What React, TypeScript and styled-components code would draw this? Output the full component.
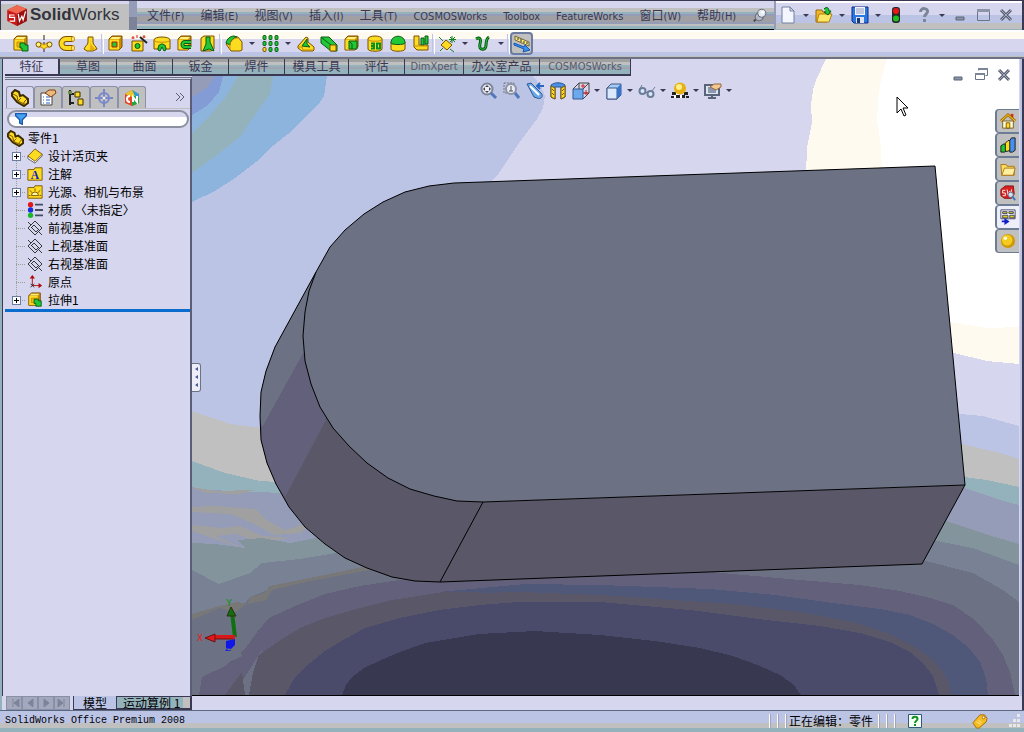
import React from "react";
import styled, { createGlobalStyle } from "styled-components";

const color = {
  navy: "#3a3852",
  lavender: "#d6d6ee",
  ice: "#bcc4e6",
  silver: "#c0c0c0",
  teal: "#94b2bc",
  slate: "#949cb8",
  cream: "#fffaf0",
};

const cjk = '"Noto Sans CJK SC", sans-serif';
const uiFont = `"DejaVu Sans Condensed", ${cjk}`;

const GlobalStyle = createGlobalStyle`
  * { box-sizing: border-box; }
  body { margin: 0; background: ${color.lavender}; color: #000; font: 12px/18px ${uiFont}; }
  button { margin: 0; padding: 0; border: 0; background: none; font: inherit; color: inherit; }
  svg { display: block; flex: none; }
`;

const Window = styled.div`
  display: flex;
  flex-direction: column;
  min-height: 100vh;
  background: ${color.lavender};
`;

/* ---------- title bar ---------- */

const TitleBar = styled.header`
  display: flex;
  height: 30px;
  border-top: 1px solid ${color.navy};
  border-left: 1px solid ${color.navy};
  border-right: 2px solid ${color.navy};
  flex: none;
`;

const Brand = styled.div`
  display: flex;
  align-items: center;
  gap: 2px;
  width: 128px;
  padding: 0 0 2px 5px;
  background: linear-gradient(${color.lavender} 3px, ${color.silver} 3px);
  color: #34343c;
  font: 17px/20px "Liberation Sans", sans-serif;
`;

const BrandEdge = styled.div`
  width: 8px;
  background: linear-gradient(${color.slate} 16px, #7c8298 16px);
`;

const MenuBar = styled.nav`
  display: flex;
  flex: 1;
  align-items: center;
  gap: 16px;
  padding: 2px 0 0 10px;
  border-bottom: 1px solid #000;
  background: linear-gradient(
    ${color.lavender} 7px, ${color.silver} 7px 11px, ${color.teal} 11px 13px,
    ${color.slate} 13px 15px, #a0a0a4 15px 21px, ${color.slate} 21px 23px,
    ${color.silver} 23px 25px, ${color.teal} 25px
  );
`;

const MenuItem = styled.button`
  color: ${color.navy};
  font-size: 12px;
  line-height: 18px;
  white-space: nowrap;
`;

const Latin = styled.span`
  font-size: 11px;
`;

const QuickAccess = styled.div`
  display: flex;
  align-items: center;
  padding-right: 5px;
  border-left: 2px solid ${color.slate};
  border-bottom: 1px solid ${color.teal};
  background: linear-gradient(#fff 2px, ${color.lavender} 2px 14px, ${color.ice} 14px 22px, ${color.silver} 22px);
`;

const Gap = styled.span<{ $w?: number }>`
  width: ${(p) => p.$w ?? 5}px;
`;

/* ---------- command toolbar ---------- */

const ToolBar = styled.div`
  display: flex;
  align-items: center;
  flex: none;
  height: 29px;
  padding-left: 9px;
  border-bottom: 2px solid #6c7284;
  background: linear-gradient(#fff 2px, ${color.cream} 2px 9px, ${color.lavender} 9px 22px, ${color.ice} 22px 26px, ${color.silver} 26px);
`;

const IconButton = styled.button<{ $pressed?: boolean }>`
  display: flex;
  align-items: center;
  justify-content: center;
  width: 23px;
  height: 23px;
  border: ${(p) => (p.$pressed ? "2px solid #6c7ca0" : "0")};
  border-radius: ${(p) => (p.$pressed ? "4px" : "0")};
  background: ${(p) => (p.$pressed ? color.silver : "none")};
`;

const DropButton = styled.button<{ $wide?: boolean }>`
  display: flex;
  align-items: center;
  justify-content: center;
  width: ${(p) => (p.$wide ? "13px" : "10px")};
  height: 23px;

  &::after {
    content: "";
    border: 3px solid transparent;
    border-top-color: ${color.navy};
    border-bottom: 0;
  }
`;

const Separator = styled.span`
  width: 3px;
  height: 20px;
  border-left: 1px solid ${color.ice};
  border-right: 1px solid #fff;
`;

/* ---------- workspace ---------- */

const Workspace = styled.main`
  display: grid;
  flex: 1;
  grid-template-columns: 187px minmax(0, 1fr);
  grid-template-rows: 17px minmax(0, 1fr);
  border-left: 2px solid ${color.teal};
  border-right: 2px solid ${color.navy};
  box-shadow: inset 1px 0 ${color.navy}, inset -1px 0 ${color.ice}, inset -2px 0 ${color.ice};
  padding: 0 3px 0 3px;
`;

const CommandTabs = styled.div`
  display: flex;
  grid-area: 1 / 1 / 2 / 3;
  z-index: 1;
  justify-self: start;
`;

const CommandTab = styled.button<{ $w: number; $active?: boolean; $dim?: boolean }>`
  width: ${(p) => p.$w}px;
  height: 17px;
  border: solid ${color.navy};
  border-width: ${(p) => (p.$active ? "0 2px 2px 0" : "0 1px 2px 0")};
  background: ${(p) =>
    p.$active
      ? color.lavender
      : `linear-gradient(#a0a0a0 3px, ${color.silver} 3px 6px, ${color.teal} 6px 8px, #a0a4b0 8px 10px, ${color.teal} 10px)`};
  color: ${(p) => (p.$dim ? "#5a5868" : color.navy)};
  line-height: 14px;
  white-space: nowrap;
`;

const SidePanel = styled.aside`
  display: flex;
  flex-direction: column;
  grid-area: 2 / 1;
  margin-top: 1px;
  padding-top: 7px;
  border-top: 3px double #6c7284;
  border-right: 2px solid #5a5e78;
  background: ${color.lavender};
`;

const PanelTabs = styled.div`
  display: flex;
  align-items: flex-end;
  height: 22px;
  padding-left: 1px;
  border-bottom: 1px solid ${color.silver};
`;

const PanelTab = styled.button<{ $active?: boolean }>`
  display: flex;
  align-items: center;
  justify-content: center;
  width: 28px;
  height: 22px;
  border: 1px solid #8c90a8;
  border-bottom: 0;
  border-radius: 3px 3px 0 0;
  background: ${(p) => (p.$active ? color.lavender : color.silver)};
`;

const MoreButton = styled.button`
  margin-left: auto;
  padding-right: 5px;
  height: 22px;
`;

const FilterBox = styled.label`
  display: flex;
  align-items: center;
  height: 18px;
  margin: 1px 1px 1px 2px;
  padding-left: 6px;
  border: 2px solid #8c90a0;
  border-radius: 9px;
  background: linear-gradient(${color.lavender} 5px, #fff 5px);
`;

const FilterInput = styled.input`
  flex: 1;
  min-width: 0;
  border: 0;
  outline: 0;
  background: transparent;
  font: 12px/14px ${uiFont};
`;

const Tree = styled.ul`
  margin: 0;
  padding: 0 0 0 2px;
  list-style: none;
  border-bottom: 3px solid #0a6ccc;
`;

const TreeRow = styled.li<{ $root?: boolean }>`
  display: flex;
  align-items: center;
  gap: ${(p) => (p.$root ? "4px" : "5px")};
  height: 18px;
  font: 12px/18px ${cjk};
  white-space: pre;
`;

const Branch = styled.span<{ $last?: boolean }>`
  display: flex;
  align-items: center;
  align-self: stretch;
  width: 14px;
  margin-left: 4px;
  margin-right: -3px;
  background:
    repeating-linear-gradient(#a09c98 0 1px, transparent 1px 2px) 5px 0 / 1px ${(p) => (p.$last ? "9px" : "18px")} no-repeat,
    repeating-linear-gradient(90deg, #a09c98 0 1px, transparent 1px 2px) 5px 9px / 9px 1px no-repeat;
`;

const Expander = styled.button`
  width: 9px;
  height: 9px;
  margin-left: 1px;
  border: 1px solid #6c7ca0;
  background:
    linear-gradient(#000, #000) center / 5px 1px no-repeat,
    linear-gradient(#000, #000) center / 1px 5px no-repeat,
    #fff;
`;

/* ---------- graphics area ---------- */

const Viewport = styled.section`
  display: grid;
  grid-area: 1 / 2 / 3 / 3;
  grid-template: minmax(0, 1fr) / minmax(0, 1fr);
  min-height: 0;
  position: relative;
  border-bottom: 1px solid #000;

  > * { grid-area: 1 / 1; }
`;

const Scene = styled.svg`
  width: 100%;
  height: 100%;
  min-height: 0;
`;

const ViewTools = styled.div`
  display: flex;
  align-self: start;
  justify-self: center;
  margin-top: 20px;
`;

const DocControls = styled.div`
  display: flex;
  align-self: start;
  justify-self: end;
  margin: 4px 4px 0 0;
`;

const TaskTabs = styled.div`
  display: flex;
  flex-direction: column;
  align-self: start;
  justify-self: end;
  margin-top: 50px;
`;

const TaskTab = styled.button<{ $active?: boolean }>`
  display: flex;
  align-items: center;
  justify-content: center;
  width: 24px;
  height: 24px;
  border: solid #6c7c94;
  border-width: 1px 0 1px 2px;
  border-radius: 4px 0 0 4px;
  background: ${(p) => (p.$active ? "#eeeef8" : color.silver)};
`;

const PanelHandle = styled.button`
  display: flex;
  flex-direction: column;
  align-items: center;
  justify-content: space-evenly;
  align-self: center;
  justify-self: start;
  width: 9px;
  height: 29px;
  border: 1px solid #6c7284;
  border-left: 0;
  border-radius: 0 3px 3px 0;
  background: #eeeef8;

  span {
    border: 2px solid transparent;
    border-right: 3px solid #4a5a9a;
    border-left: 0;
  }
`;

const Pointer = styled.svg`
  position: absolute;
  left: 704px;
  top: 37px;
`;

/* ---------- bottom bars ---------- */

const SheetBar = styled.div`
  display: flex;
  flex: none;
  height: 14px;
  padding-left: 4px;
  border-left: 2px solid ${color.teal};
  border-right: 2px solid ${color.navy};
`;

const SheetNav = styled.button`
  display: flex;
  align-items: center;
  justify-content: center;
  width: 16px;
  height: 14px;
  border: 1px solid #8890a8;
  background: #a4a8bc;
`;

const SheetTab = styled.button<{ $active?: boolean }>`
  height: 14px;
  padding: ${(p) => (p.$active ? "0 9px" : "0 10px 0 6px")};
  margin-left: ${(p) => (p.$active ? "3px" : "0")};
  border: solid ${color.navy};
  border-width: ${(p) => (p.$active ? "0 1px 1px" : "1px 2px 2px 0")};
  background: ${(p) => (p.$active ? color.ice : `linear-gradient(90deg, ${color.teal} 66px, ${color.silver} 66px)`)};
  font: 12px/10px ${cjk};
  white-space: nowrap;
`;

const StatusBar = styled.footer`
  display: flex;
  align-items: center;
  flex: none;
  height: 22px;
  padding: 0 3px 2px 5px;
  border-top: 1px solid #5a6880;
  background: linear-gradient(${color.ice} 12px, ${color.silver} 12px 17px, ${color.teal} 17px);
  font: 10px/18px "Liberation Mono", monospace;
`;

const StatusText = styled.span`
  flex: 1;
`;

const StatusMode = styled.span`
  font: 12px/18px ${cjk};
  white-space: nowrap;
`;

const Ridges = styled.span`
  width: 20px;
  height: 14px;
  background: repeating-linear-gradient(90deg, ${color.cream} 0 1px, #9ca4c0 1px 2px, transparent 2px 8px);
`;

const StatusButton = styled.button<{ $gap: number }>`
  margin-right: ${(p) => p.$gap}px;
`;

/* ---------- icon artwork ---------- */

const Y = "#fcdc20";
const D = "#c88c08";
const O = "#7c5000";
const G = "#20c838";
const K = "#0a5a14";

const block = (
  <>
    <path d="M2 4l3-3h10v11l-3 3H2z" fill={D} stroke={O} />
    <path d="M2.500 4.500h9.500v10H2.500z" fill={Y} />
    <path d="M3 4l2-2h9l-2 2z" fill="#fff080" />
  </>
);

const art: Record<string, React.ReactNode> = {
  extrude: <>{block}<path d="M5 7h6v5H5z" fill="#f0b810" stroke={D} /><path d="M8 8h5v2h3v6h-6v-3H8z" fill={G} stroke={K} /></>,
  revolve: <><path d="M9 0v17" stroke="#222" strokeDasharray="5 2" /><path d="M3 8h3l3 2 3-2h3v4h-3l-3 2-3-2H3z" fill={Y} stroke={D} /><circle cx="3.500" cy="9.500" r="2.500" fill="#fff080" stroke={O} /><circle cx="14.500" cy="9.500" r="2.500" fill="#fff080" stroke={O} /></>,
  sweep: <><path d="M15 4H8a4 4 0 0 0 0 9h7" fill="none" stroke={O} strokeWidth="6" /><path d="M15 4H8a4 4 0 0 0 0 9h7" fill="none" stroke={Y} strokeWidth="4" /><ellipse cx="15" cy="4" rx="1.500" ry="2.500" fill="#fff080" stroke={D} /><ellipse cx="15" cy="13" rx="1.500" ry="2.500" fill="#fff080" stroke={D} /></>,
  loft: <><path d="M7 2h5v5c0 3 3 4 4 7l-4 2H6l-3-2c1-3 4-4 4-7z" fill={Y} stroke={O} /><path d="M10 3v5c0 3 3 4 4 6l-2 1H9z" fill="#e8a810" /></>,
  cut: <>{block}<path d="M5 7h5v5H5z" fill={G} stroke="#b02000" /></>,
  hole: <><path d="M2 6h11v10H2z" fill={Y} stroke={O} /><circle cx="7.500" cy="11" r="2.500" fill={G} stroke={K} /><path d="M10 2l7 6" stroke="#222" strokeWidth="2" /><path d="M3 1v3M7 0v3M14 0v3M1.500 3h3M12.500 2h3" stroke="#d82010" /></>,
  revcut: <><path d="M1 5c0-4 16-4 16 0v9h-4l-1-4H6l-1 4H1z" fill={Y} stroke={O} /><path d="M1 5c0 3 16 3 16 0" fill="none" stroke={D} /><path d="M5 15c0-8 8-8 8 0l-2 1-2-4-2 4z" fill={G} stroke={K} /></>,
  sweepcut: <>{block}<path d="M15 7H9a2 2 0 0 0 0 5h6" fill="none" stroke={K} strokeWidth="4" /><path d="M15 7H9a2 2 0 0 0 0 5h6" fill="none" stroke={G} strokeWidth="2" /></>,
  loftcut: <><path d="M2 3l3-2h10v13l-3 2H2z" fill={Y} stroke={O} /><path d="M7 2h4v5l4 9-5-2-6 2 3-7z" fill={G} stroke={K} /></>,
  fillet: <><path d="M1 9l6-7h6l4 5v8l-2 1H6z" fill={Y} stroke={O} /><path d="M1 8c1-4 4-7 8-7l3 1c-4 1-7 4-7 8z" fill={G} stroke={K} /><path d="M5 15V9c1-4 4-6 8-6" fill="none" stroke={D} /></>,
  pattern: <>{[2, 8, 14].map((x) => [0, 6, 12].map((y) => <rect key={`${x}${y}`} x={x} y={y + 0.5} width="3" height="4" rx="1" fill={x === 2 && y === 12 ? Y : G} stroke={x === 2 && y === 12 ? O : K} />))}</>,
  rib: <><path d="M1 11l8-9 2 1v4l6 5v3l-1 1H5l-4-3z" fill={Y} stroke={O} /><path d="M5 11l5-7v5l3 3z" fill={G} stroke={K} /><path d="M1 12h4l1 3h10" fill="none" stroke={D} /></>,
  draft: <><path d="M1 2h8l8 8v6h-6L1 8z" fill={G} stroke={K} /><path d="M10 10h6v6h-6z" fill={Y} stroke={O} /><path d="M2 3l9 7" stroke={K} /></>,
  shell: <>{block}<path d="M6 6h8v8H6z" fill={G} stroke={K} /><path d="M6 6l3 3v5" fill="none" stroke={K} /></>,
  wrap: <><path d="M2 4c0-4 14-4 14 0v10c0 3-14 3-14 0z" fill={Y} stroke={O} /><path d="M2 4c0 3 14 3 14 0" fill="none" stroke={D} /><path d="M5 8.500h3v5H5M5 11h3M11 8.500h3v5h-3z" fill="none" stroke="#089020" strokeWidth="2" /></>,
  dome: <><path d="M2 7v7c0 3 14 3 14 0V7z" fill={Y} stroke={O} /><path d="M2 8c0-9 14-9 14 0 0 2-14 2-14 0z" fill={G} stroke={K} /></>,
  mirror: <><path d="M2 1h5v9h9v5H5l-3-3z" fill={Y} stroke={O} /><path d="M9 3h3v7H9zM13 1h3v8h-3z" fill={G} stroke={K} /><path d="M3 11h12" stroke={D} /></>,
  refgeom: <><path d="M8 5l6 5-5 5-6-5z" fill={Y} stroke={O} /><path d="M1 2l4 4M12 14l4 3M2 16l3-3M14 1v7M11 4.500h7M12 2l5 5M17 2l-5 5" stroke="#108020" /></>,
  curve: <><path d="M2 4c5-3 5 2 4 5s0 6 4 5 0-9 5-12" fill="none" stroke={K} strokeWidth="3" /><path d="M2 4c5-3 5 2 4 5s0 6 4 5 0-9 5-12" fill="none" stroke={G} /></>,
  instant: <><path d="M2 1l14 6v4L2 5z" fill="#fce878" stroke="#6c6440" /><path d="M5 3v2M8 4v3M11 6v2M14 7v2" stroke="#333" /><path d="M1 8l10 4 1-2 5 5-7 2 1-3L1 10z" fill="#3890f0" stroke="#1858b0" /></>,
  page: <path d="M3 1h8l4 4v12H3zM11 1v4h4" fill="#f4f6ff" stroke="#7080a0" />,
  open: <><path d="M1 4h6l1 2h7v3L12 16H1z" fill="#f0b828" stroke="#986810" /><path d="M4 8h13l-3 8H2z" fill="#fce868" stroke="#b88010" /><path d="M9 3c3-3 5-1 5 2h2l-3 4-4-3h2" fill={G} stroke={K} /></>,
  save: <><path d="M1 1h16v16H3l-2-2z" fill="#2878e0" stroke="#102888" /><path d="M4 1h10v8H4z" fill="#f4f4ff" /><path d="M5 3h8M5 5h8M5 7h8" stroke="#909cb8" /><path d="M5 11h8v6H5z" fill="#dce4f4" /><path d="M6 12h3v5H6z" fill="#183878" /></>,
  traffic: <><rect x="5" y="1" width="8" height="16" rx="3" fill="#282828" /><circle cx="9" cy="5" r="3" fill="#e81818" /><circle cx="9" cy="12.500" r="3" fill="#20c020" /></>,
  help: <><path d="M5.500 6c0-5 8-4 7 0-.5 2-3 2.500-3 5" fill="none" stroke="#7c8498" strokeWidth="3" /><path d="M8 13h3v3H8z" fill="#7c8498" /></>,
  min: <path d="M5 11h8v3H5z" fill="#8c94a8" stroke="#5a6478" />,
  max: <><path d="M3.500 3.500h12v11h-12z" fill="none" stroke="#6c7488" /><path d="M3 3h13v3H3z" fill="#8c94a8" /></>,
  restore: <><path d="M6.500 4.500v-2h9v7h-2M3.500 7.500h9v6h-9z" fill="none" stroke="#6c7488" /><path d="M6 2h10v2H6zM3 7h10v2H3z" fill="#7c8498" /></>,
  close: <><path d="M4 4l10 10M14 4L4 14" stroke="#5a6074" strokeWidth="3" /><path d="M4 4l10 10M14 4L4 14" stroke="#a4acbc" /></>,
  pin: <><path d="M2 15l6-6" stroke="#444" strokeWidth="2" /><circle cx="8" cy="10" r="4.500" fill="#b4b8c4" stroke="#5a6074" /><circle cx="11" cy="6" r="4.500" fill="#e4e8f0" stroke="#5a6074" /><circle cx="12" cy="5" r="1.500" fill="#fff" /></>,
  zoomfit: <><circle cx="7" cy="7" r="5.500" fill="#eef" stroke="#7c8498" strokeWidth="2" /><path d="M11 11l5 5" stroke="#5078b8" strokeWidth="3" /><path d="M7 3l2 2H5zM7 11l2-2H5zM3 7l2-2v4zM11 7L9 5v4z" fill="#444" /></>,
  zoomarea: <><path d="M1 1h10v10H1z" fill="none" stroke="#777" strokeDasharray="2 1" /><circle cx="8" cy="7" r="5" fill="#e8eaf4" stroke="#8c94a8" strokeWidth="2" /><path d="M12 11l4 5" stroke="#5078b8" strokeWidth="3" /><path d="M8 4v5M6 9h4" stroke="#555" /></>,
  prev: <><path d="M1 2l4-1 10 10c3 3 0 7-4 5L8 15z" fill="#6ca8e8" stroke="#305890" /><path d="M4 4l9 9" stroke="#fff" strokeWidth="2" /><path d="M11 4h7M14 1l-3 3 3 3" fill="none" stroke="#2868c0" strokeWidth="2" /></>,
  section: <><path d="M2 3c4-3 10-3 14 0v12l-4 2V5H6v12l-4-2z" fill="#4c90e0" stroke="#285898" /><path d="M2 4l4 2v11l-4-2zM12 6l4-2v11l-4 2z" fill={Y} stroke={O} /><path d="M3 7l2 2M3 11l2 2M13 9l2-2M13 13l2-2" stroke={O} /></>,
  orient: <><path d="M1 7h10v10H1z" fill="#6ca8ec" stroke="#305890" /><path d="M1 7l6-6h10v10l-6 6M7 1v6M17 1l-6 6M11 11h6" fill="none" stroke="#444" /><path d="M11 2v4M9 4h4M14 8v5M12 11h4" stroke="#e02020" /></>,
  display: <><path d="M2 6l4-4h10v11l-4 4H2z" fill="#a4ccf8" stroke="#405880" /><path d="M2 6h10v11H2z" fill="#dce8fc" stroke="#405880" /><path d="M12 6l4-4v11l-4 4z" fill="#3474d0" /></>,
  hide: <><circle cx="4.500" cy="9" r="3" fill="#d8e8ff" stroke="#6c7c98" strokeWidth="2" /><circle cx="12.500" cy="12" r="3" fill="#d8e8ff" stroke="#6c7c98" strokeWidth="2" /><path d="M2 7l2-4M14 9l3-4M7 10l3 1" stroke="#6c7c98" /></>,
  appearance: <><path d="M1 10h4v3H1zM13 10h4v3h-4zM5 13h4v3H5zM11 13h3v3h-3zM0 14h3v2H0zM15 14h3v2h-3z" fill="#222" /><path d="M5 10h3v3H5zM9 13h2v3H9zM3 13h2v3H3z" fill="#fff" /><circle cx="9" cy="6.500" r="6" fill="#e8b010" /><circle cx="8" cy="5" r="3" fill="#fff088" /></>,
  viewset: <><path d="M1 3h14v10H1z" fill="#dce4f4" stroke="#5a6478" strokeWidth="2" /><path d="M4 5h8v6H4z" fill="#8c98b0" /><path d="M4 16h8M8 13v4" stroke="#5a6478" strokeWidth="2" /><path d="M6 5l4-3h7v3l-5 3z" fill="#f0c890" stroke="#98683c" /></>,
  part: <><path d="M1 4l3-3 4 2 1 4 3-1 5 4v4l-4 3-7-4L1 7z" fill={Y} stroke="#3c2c00" strokeWidth="2" /><path d="M2 5l4 2 1 5 6 3M13 16v-3l3-3M7 12l3-3" fill="none" stroke={O} /></>,
  property: <><path d="M2 4h11v12H2z" fill="#fff" stroke="#444" /><path d="M4 8h1M7 8h4M4 11h1M7 11h4M4 14h1M7 14h4" stroke="#2860c0" /><path d="M6 4l4-3h6l1 3-5 4z" fill="#f0b878" stroke="#784018" /></>,
  config: <><path d="M3 1v15M3 5h4M3 14h4" stroke="#222" strokeWidth="2" /><path d="M8 3h5v5H8zM11 10h5v6h-5z" fill={Y} stroke="#3c2c00" /><path d="M1 2h4v3H1z" fill="#6c8c50" /></>,
  dim: <><circle cx="9" cy="9" r="5" fill="none" stroke="#7888c8" strokeWidth="2" /><path d="M9 0v18M0 9h18" stroke="#7888c8" strokeWidth="2" /><circle cx="9" cy="9" r="1.500" fill="#eef" /></>,
  cosmos: <><path d="M2 5l7-4 7 4v9l-7 3-7-3z" fill="#e04828" /><path d="M2 5l7-4 7 4-7 3z" fill="#e8c828" /><path d="M9 8l7-3v9l-7 3z" fill="#20a840" /><path d="M9 1l7 4v4l-4-2z" fill="#2c9cd8" /><path d="M7 7a3 3 0 1 0 0 6M10 13V8l4 5V7" fill="none" stroke="#fff" strokeWidth="2" /></>,
  design: <><path d="M1 9v3l8 5 8-8V7z" fill="#fff" stroke="#555" /><path d="M1 9l8-8 8 6-8 8z" fill={Y} stroke={O} /></>,
  folder: <path d="M1 4h7l1-2h8v14H1z" fill={Y} stroke={O} />,
  material: <><circle cx="4" cy="3" r="3" fill="#e01818" /><circle cx="4" cy="9" r="3" fill="#1830e0" /><circle cx="4" cy="15" r="3" fill="#18b828" /><path d="M9 3h9M9 9h9M9 15h9" stroke="#444c60" strokeWidth="2" /></>,
  plane: <path d="M9 1l8 8-8 8-8-8zM1 2l4 4M13 13l4 4M8 6l5 5-3 2-5-5z" fill="none" stroke="#222" shapeRendering="crispEdges" />,
  origin: <><path d="M6 13V2M6 13h10" stroke="#b00808" /><path d="M6 1l3 4H3zM17 13l-4-3v6z" fill="#b00808" /><path d="M4 11l4 4M8 11l-4 4" stroke="#222" /></>,
  home: <><path d="M12 1h3v6h-3z" fill="#d82818" /><path d="M3 9h12v8H3z" fill="#fff8d8" stroke="#705820" /><path d="M1 9l8-7 8 7" fill="none" stroke="#a86c08" strokeWidth="3" /><path d="M1 9l8-7 8 7" fill="none" stroke={Y} /><path d="M7 11h4v6H7z" fill={Y} stroke={O} /></>,
  library: <><path d="M1 10l3-2h3v8l-2 1H1z" fill={G} stroke="#111" /><path d="M6 7l3-3h3v10l-3 2H6z" fill={Y} stroke="#111" /><path d="M11 4l2-3h4v14l-3 2h-3z" fill="#4890f0" stroke="#111" /></>,
  files: <><path d="M1 4h6l1 2h8v10H2z" fill="#fce060" stroke="#a87010" /><path d="M5 8h12l-2 8H2z" fill="#fff0a0" stroke="#a87010" /></>,
  search: <><path d="M1 5l5-4h9l1 9-3 5H5L1 12z" fill="#d82020" stroke="#801010" /><path d="M6 6H3v3h3v3H3M8 5l1 6 2-4 1 4 1-6" fill="none" stroke="#fff" /><circle cx="12" cy="11" r="3" fill="#d0e0f0" stroke="#5a6478" /><path d="M14 13l3 4" stroke="#3870c0" strokeWidth="2" /></>,
  palette: <><path d="M1 1h16v10H1z" fill="#fff" stroke="#333c60" /><path d="M3 3h5v2H3zM10 3h5v2h-5zM3 7h6v3H3zM11 7h5v3h-5z" fill="#e8d020" stroke="#333c60" /><path d="M2 14h6M6 12l3 2-3 2z" fill="#1020c8" stroke="#1020c8" strokeWidth="2" /></>,
  sphere: <><circle cx="9" cy="9" r="8" fill="#d09808" /><circle cx="8" cy="8" r="6" fill="#f4cc20" /><circle cx="6" cy="6" r="2" fill="#fffce0" /></>,
  funnel: <path d="M1 1h16v3l-6 6v7l-4-2v-5L1 4z" fill="#48a0f0" stroke="#1858b0" strokeWidth="2" />,
  logo: <><path d="M1 5l8-4 8 3v10l-8 4-8-4z" fill="#c81818" /><path d="M1 5l8-4 8 3-8 4z" fill="#f06850" /><path d="M9 8l8-4v10l-8 4z" fill="#981010" /><path d="M7 9H3v2h4v3H3M10 8l1 6 2-4 1 3 2-7" fill="none" stroke="#fff" /></>,
  tag: <><path d="M1 11l8-9h5l3 4-1 4-8 7H5z" fill="#f4bc20" stroke="#a06808" /><circle cx="13" cy="5" r="1.500" fill="#fff" stroke="#a06808" /><path d="M5 10l5 3M7 8l4 3" stroke="#fff0a0" /></>,
  helpbox: <><path d="M2.500 2.500h13v13h-13z" fill="#f4fff4" stroke="#305880" /><path d="M6.500 7c0-3 5-3 5 0 0 2-2.500 1.500-2.500 4M9 12v2" fill="none" stroke="#109020" strokeWidth="2" /></>,
};

function Icon({ name, size = 18 }: { name: string; size?: number }) {
  return (
    <svg width={size} height={size} viewBox="0 0 18 18" aria-hidden="true">
      {art[name]}
    </svg>
  );
}

/* ---------- data ---------- */

const menus: [string, string][] = [
  ["文件", "(F)"], ["编辑", "(E)"], ["视图", "(V)"], ["插入", "(I)"], ["工具", "(T)"],
  ["", "COSMOSWorks"], ["", "Toolbox"], ["", "FeatureWorks"], ["窗口", "(W)"], ["帮助", "(H)"],
];

/* A trailing "v" marks a tool with a drop-down, "|" a divider. */
const featureTools = [
  "extrude", "revolve", "sweep", "loft", "|", "cut", "hole", "revcut", "sweepcut", "loftcut", "|",
  "fillet v", "pattern v", "rib", "draft", "shell", "wrap", "dome", "mirror", "|", "refgeom v", "curve v", "|",
];
const viewTools = ["zoomfit", "zoomarea", "prev", "section", "orient v", "display v", "hide v", "appearance v", "viewset v"];

const tabs = [
  { label: "特征", w: 55 }, { label: "草图", w: 57 }, { label: "曲面", w: 56 }, { label: "钣金", w: 56 },
  { label: "焊件", w: 56 }, { label: "模具工具", w: 64 }, { label: "评估", w: 56 },
  { label: "DimXpert", w: 59, latin: true }, { label: "办公室产品", w: 76 }, { label: "COSMOSWorks", w: 91, latin: true },
];

const tree = [
  { label: "设计活页夹", icon: "design", open: true },
  { label: "注解", icon: "folder", open: true, mark: "A" },
  { label: "光源、相机与布景", icon: "folder", open: true, mark: "sun" },
  { label: "材质 〈未指定〉", icon: "material" },
  { label: "前视基准面", icon: "plane" },
  { label: "上视基准面", icon: "plane" },
  { label: "右视基准面", icon: "plane" },
  { label: "原点", icon: "origin" },
  { label: "拉伸1", icon: "extrude", open: true },
];

function Tools({ items, wide }: { items: string[]; wide?: boolean }) {
  return (
    <>
      {items.map((item, i) => {
        if (item === "|") return <Separator key={i} />;
        const [name, drop] = item.split(" ");
        return (
          <React.Fragment key={i}>
            <IconButton aria-label={name}><Icon name={name} /></IconButton>
            {drop && <DropButton $wide={wide} aria-label={`${name} options`} />}
          </React.Fragment>
        );
      })}
    </>
  );
}

function TreeIcon({ icon, mark }: { icon: string; mark?: string }) {
  return (
    <svg width="16" height="16" viewBox="0 0 18 18" aria-hidden="true">
      {art[icon]}
      {mark === "A" && <text x="9" y="15" textAnchor="middle" fontFamily="Liberation Serif" fontWeight="bold" fontSize="13" fill="#1020c8">A</text>}
      {mark === "sun" && <path d="M5 13a4 4 0 0 1 8 0zM9 5v3M3 7l3 3M15 7l-3 3M2 13h2M14 13h2" fill="#fff8a0" stroke={O} />}
    </svg>
  );
}

/* ---------- 3D scene ---------- */

const background: [string, string][] = [
  // sky, right side, from back to front
  ["#d6d6ee", "M526 59L533 76 541 86 545 96 543 108 537 119 519 143 499 173 488 184 500 420 1019 426V59z"],
  ["#fffaf0", "M826 59L817 78 813 90 811 105 812 123 807 148 806 175 950 352 987 361 1019 364V59z"],
  ["#ffffff", "M887 59L881 80 878 101 877 121 881 146 882 175 950 322 987 328 1019 327V59z"],
  // sky, top left
  ["#8cb4dc", "M192 202L215 191 235 178 256 162 274 145 293 130 307 115 318 105 324 96 327 76V59H192z"],
  ["#94b2bc", "M192 173L213 158 240 137 252 119 270 94 273 76V59H192z"],
  ["#8cb4dc", "M192 133L205 121 225 98 238 76V59H192z"],
  ["#849cd6", "M192 115L207 106 219 92 223 76V59H192z"],
  ["#949cb8", "M192 97L207 88 215 76V59H192z"],
  // horizon, left
  ["#c0c0c0", "M192 411L230 424 262 428 600 460V695H192z"],
  ["#94b2bc", "M192 461L225 473 260 481 600 500V695H192z"],
  ["#949cb8", "M192 487L210 490 282 493 600 520V695H192z"],
  ["#a0a0a0", "M192 487L215 491 255 490 240 494 205 493zM192 507L215 506 255 509 267 520 285 530 310 523 300 533 275 535 250 522 230 514 192 512z"],
  ["#a0a0a0", "M192 525L222 528 240 526 262 536 290 538 270 541 250 539 235 534 215 536 245 549 192 531z"],
  ["#84949c", "M192 543L215 544 245 548 238 540 262 538 290 543 325 536 600 560V695H192z"],
  ["#788294", "M192 570L219 584 250 573 262 563 300 559 342 552 600 575V695H192z"],
  // horizon, right
  ["#bcc4e6", "M700 414H960L983 416 1019 426V695H700z"],
  ["#c0c0c0", "M700 444H962L1000 453 1019 459V695H700z"],
  ["#94b2bc", "M700 477H964L987 480 1019 487V695H700z"],
  ["#949cb8", "M700 487H961L1000 500 1019 505V695H700z"],
  ["#84949c", "M700 521H947L985 534 1019 544V695H700z"],
  ["#788294", "M700 541H937L973 548 1019 565V695H700z"],
  // floor rings
  ["#6c7284", "M192 619L219 608 245 604 250 597 268 590 365 569 500 560H922L973 573 1003 590 1019 602V695H192z"],
  ["#787878", "M192 614L219 606 237 602 248 604 250 597 265 593 269 586 310 578 367 566 375 569 310 581 272 590 266 600 245 605 236 612 219 608 192 620z"],
  ["#62607a", "M199 695L202 677 225 666 245 649 257 632 269 618 295 606 325 594 360 586 399 580 560 572H710L800 580 860 585 900 591 930 598 953 605 975 620 993 640 1003 655 1010 672 1015 695z"],
  ["#6c7284", "M220 659L240 650 242 656 225 664zM243 680L240 695H251L262 650z"],
  ["#5a5868", "M225 695L242 672 245 695zM249 695L253 672 259 655 279 641 300 628 325 618 360 608 392 600 450 591 560 585 710 590 900 620 960 695z"],
  ["#50587a", "M439 592L525 584 600 585 710 589 775 595 833 603 880 609 910 615 933 624 953 635 970 649 980 662 986 678 988 695H700L600 596 520 593z"],
  ["#5a5868", "M439 594L520 592 600 595 733 604 800 612 853 622 890 634 917 648 933 660 943 672 949 683 951 695H400z"],
  ["#4a4a6a", "M285 695L295 677 310 663 325 651 345 639 365 628 400 618 439 610 480 605 519 602H600L690 610 767 620 820 626 860 633 890 642 910 652 923 663 933 676 939 695z"],
  ["#383850", "M342 695L346 685 352 677 364 668 379 661 400 652 425 643 479 634 535 631 600 635 655 641 700 648 733 656 760 666 780 675 793 684 801 695z"],
];

const rimTop = "316 272 309 291 305 312 303 336 305 361 311 384 320 407 333 428 349 446 367 463 388 478 410 489 434 496 457 501 483 502";
const sideEdge = "316 272 275 347 266 371 261 392 260 416 261 440 267 463 276 484 289 507 305 527 325 544 345 558 367 568 392 577 415 581 440 582";

function ModelScene() {
  return (
    <Scene viewBox="192 59 827 636" preserveAspectRatio="xMidYMid slice" role="img" aria-label="零件1">
      <g shapeRendering="crispEdges">
        <path d="M192 59h827v636H192z" fill="#bcc4e6" />
        {background.map(([fill, d], i) => <path key={i} d={d} fill={fill} />)}
      </g>
      <polygon points={`${sideEdge} 922 564 965 485 483 502 340 400`} fill="#5a5868" />
      <polygon points="316 272 275 347 266 371 261 392 260 416 262 428 303 354 330 330" fill="#6c7284" />
      <polygon points="303 354 262 428 261 440 267 463 276 484 285 497 326 420 320 380" fill="#62607a" />
      <g stroke="#000" strokeLinejoin="round">
        <polyline points={`${sideEdge} 922 564 965 485`} fill="none" />
        <polygon points={`${rimTop} 965 485 935 166 454 183 429 186 405 192 383 202 364 214 345 230 330 247`} fill="#6c7284" />
        <path d="M483 502L440 582" />
      </g>
      <path d="M235 637L232 613" stroke="#107010" strokeWidth="4" />
      <path d="M231 607l5 9h-9z" fill="#107010" stroke="#303010" />
      <path d="M226 641l9-2v6l-4 4-5-1z" fill="#1018e8" />
      <path d="M235 637H212" stroke="#d81818" strokeWidth="4" />
      <path d="M211 639H233" stroke="#701010" />
      <path d="M205 638l10-4v8z" fill="#e01818" stroke="#701010" />
      <g fontFamily="Liberation Mono" fontSize="10">
        <text x="197" y="641" fill="#e81818">X</text>
        <text x="226" y="606" fill="#109010">Y</text>
        <text x="225" y="651" fill="#1018e8">Z</text>
      </g>
    </Scene>
  );
}

/* ---------- page ---------- */

export default function App() {
  return (
    <Window>
      <GlobalStyle />
      <TitleBar>
        <Brand><Icon name="logo" size={22} /><span><b>Solid</b>Works</span></Brand>
        <BrandEdge />
        <MenuBar>
          {menus.map(([cn, latin]) => (
            <MenuItem key={cn + latin}>{cn}<Latin>{latin}</Latin></MenuItem>
          ))}
          <button aria-label="pin menu"><Icon name="pin" size={16} /></button>
        </MenuBar>
        <QuickAccess>
          <Tools wide items={["page v", "open v", "save v", "traffic"]} />
          <Gap />
          <Tools wide items={["help v", "min", "max", "close"]} />
        </QuickAccess>
      </TitleBar>

      <ToolBar>
        <Tools wide items={featureTools} />
        <IconButton $pressed aria-label="Instant3D"><Icon name="instant" /></IconButton>
      </ToolBar>

      <Workspace>
        <CommandTabs role="tablist">
          {tabs.map((t, i) => (
            <CommandTab key={t.label} role="tab" aria-selected={i === 0} $w={t.w} $active={i === 0} $dim={t.latin}>
              {t.latin ? <Latin>{t.label}</Latin> : t.label}
            </CommandTab>
          ))}
        </CommandTabs>

        <SidePanel>
          <PanelTabs role="tablist">
            {["part", "property", "config", "dim", "cosmos"].map((n, i) => (
              <PanelTab key={n} role="tab" aria-label={n} $active={i === 0}><Icon name={n} /></PanelTab>
            ))}
            <MoreButton aria-label="more tabs">
              <svg width="10" height="10" viewBox="0 0 10 10"><path d="M1 1l4 4-4 4M5 1l4 4-4 4" fill="none" stroke="#5a6074" /></svg>
            </MoreButton>
          </PanelTabs>
          <FilterBox>
            <Icon name="funnel" size={12} />
            <FilterInput type="search" aria-label="过滤" />
          </FilterBox>
          <Tree>
            <TreeRow $root><Icon name="part" size={17} />零件1</TreeRow>
            {tree.map((n, i) => (
              <TreeRow key={n.label}>
                <Branch $last={i === tree.length - 1}>{n.open && <Expander aria-label={`expand ${n.label}`} />}</Branch>
                <TreeIcon icon={n.icon} mark={n.mark} />
                {n.label}
              </TreeRow>
            ))}
          </Tree>
        </SidePanel>

        <Viewport>
          <ModelScene />
          <ViewTools><Tools items={viewTools} /></ViewTools>
          <DocControls><Tools items={["min", "restore", "close"]} /></DocControls>
          <TaskTabs role="tablist">
            {["home", "library", "files", "search", "palette", "sphere"].map((n) => (
              <TaskTab key={n} role="tab" aria-label={n} $active={n === "palette"}><Icon name={n} size={16} /></TaskTab>
            ))}
          </TaskTabs>
          <PanelHandle aria-label="collapse panel"><span /><span /><span /></PanelHandle>
          <Pointer width="13" height="22" viewBox="0 0 13 22">
            <path d="M1 1v16l4-4 3 7 2-1-3-7h5z" fill="#fff" stroke="#000" />
          </Pointer>
        </Viewport>
      </Workspace>

      <SheetBar>
        {["M5 2v8M11 2L6 6l5 4z", "M9 2L4 6l5 4z", "M4 2l5 4-5 4z", "M8 2v8M2 2l5 4-5 4z"].map((d) => (
          <SheetNav key={d} aria-label="scroll sheets">
            <svg width="12" height="12" viewBox="0 0 12 12"><path d={d} fill="#7c849c" stroke="#7c849c" /></svg>
          </SheetNav>
        ))}
        <SheetTab $active>模型</SheetTab>
        <SheetTab>运动算例 1</SheetTab>
      </SheetBar>

      <StatusBar>
        <StatusText>SolidWorks Office Premium 2008</StatusText>
        <Ridges />
        <StatusMode>正在编辑：零件</StatusMode>
        <Gap />
        <Ridges />
        <Gap $w={8} />
        <StatusButton $gap={48} aria-label="help"><Icon name="helpbox" /></StatusButton>
        <StatusButton $gap={20} aria-label="tags"><Icon name="tag" size={16} /></StatusButton>
        <svg width="13" height="13" viewBox="0 0 13 13">
          <path d="M9 0h3v3H9zM5 5h3v3H5zM9 5h3v3H9zM1 10h3v3H1zM5 10h3v3H5zM9 10h3v3H9z" fill="#e8e8e8" />
        </svg>
      </StatusBar>
    </Window>
  );
}
